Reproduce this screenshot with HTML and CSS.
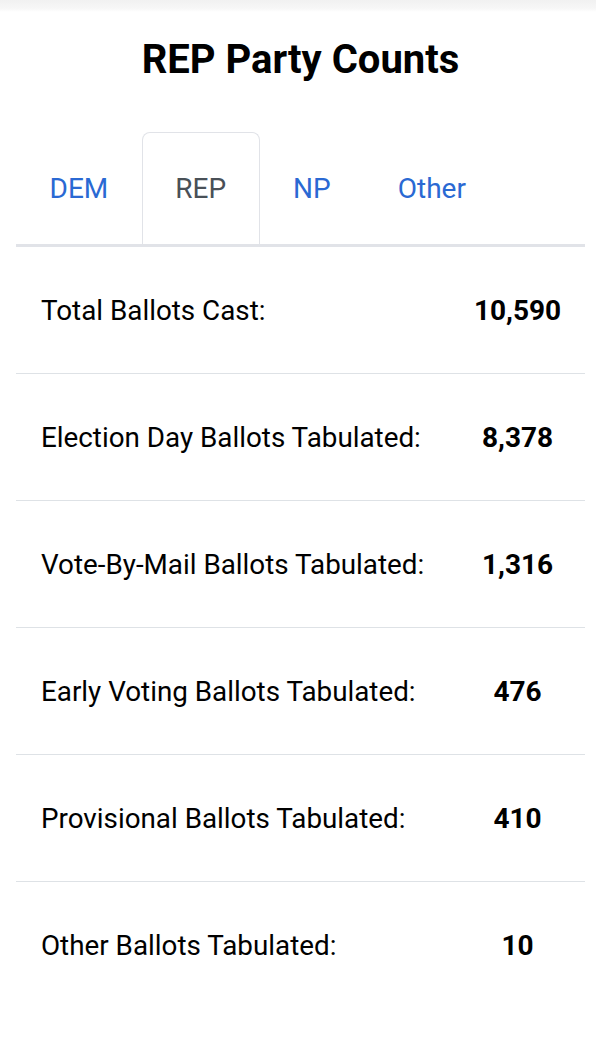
FILE: index.html
```html
<!DOCTYPE html>
<html>

<head>
    <meta charset="utf-8">
    <title>REP Party Counts</title>
    <link rel="stylesheet" href="styles.css">
</head>

<body>
    <div class="top_shade"></div>

    <div class="page">
        <h1 class="page_title">REP Party Counts</h1>

        <ul class="party_tabs">
            <li><a href="#" class="tab_link">DEM</a></li>
            <li><a href="#" class="tab_link active">REP</a></li>
            <li><a href="#" class="tab_link">NP</a></li>
            <li><a href="#" class="tab_link">Other</a></li>
        </ul>

        <div class="counts">
            <div class="count_row">
                <span class="count_label">Total Ballots Cast:</span>
                <span class="count_value">10,590</span>
            </div>
            <div class="count_row">
                <span class="count_label">Election Day Ballots Tabulated:</span>
                <span class="count_value">8,378</span>
            </div>
            <div class="count_row">
                <span class="count_label">Vote-By-Mail Ballots Tabulated:</span>
                <span class="count_value">1,316</span>
            </div>
            <div class="count_row">
                <span class="count_label">Early Voting Ballots Tabulated:</span>
                <span class="count_value">476</span>
            </div>
            <div class="count_row">
                <span class="count_label">Provisional Ballots Tabulated:</span>
                <span class="count_value">410</span>
            </div>
            <div class="count_row">
                <span class="count_label">Other Ballots Tabulated:</span>
                <span class="count_value">10</span>
            </div>
        </div>
    </div>
</body>

</html>
```

FILE: styles.css
```css
body {
    margin: 0;
    background: #fff;
    font-family: Roboto, "Liberation Sans", sans-serif;
    color: #000;
}

.top_shade {
    height: 12px;
    background: linear-gradient(180deg, #f1f1f1 0%, #f7f7f7 70%, #fff 100%);
}

.page {
    padding: 0 11px 0 16px;
}

.page_title {
    margin: 24px 0 0 0;
    font-size: 40px;
    line-height: 48px;
    font-weight: bold;
    text-align: center;
}

.party_tabs {
    list-style: none;
    margin: 48px 0 0 0;
    padding: 0;
    display: flex;
    border-bottom: 3px solid #e1e3e8;
}

.tab_link {
    display: block;
    padding: 0 32.5px;
    height: 111px;
    line-height: 111px;
    font-size: 28px;
    color: #2a69d3;
    text-decoration: none;
    border: 1px solid transparent;
    border-bottom: none;
    border-radius: 8px 8px 0 0;
}

.tab_link.active {
    color: #495057;
    border-color: #e1e3e8;
}

.count_row {
    display: grid;
    grid-template-columns: 1fr 135px;
    align-items: center;
    height: 126px;
    border-bottom: 1px solid #dee2e6;
}

.count_row:last-child {
    border-bottom: none;
}

.count_label {
    padding-left: 25px;
    font-size: 27.8px;
}

.count_value {
    text-align: center;
    font-size: 28px;
    font-weight: bold;
}
```
